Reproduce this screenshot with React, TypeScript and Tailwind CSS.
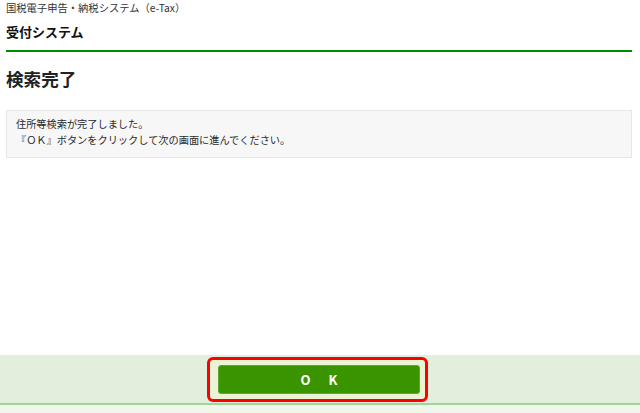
import React from "react";

export default function App() {
  const font = { fontFamily: '"Noto Sans CJK JP", "Noto Sans", sans-serif' };
  return (
    <div className="flex min-h-[413px] flex-col bg-white text-[#222]" style={font}>
      <div className="px-[6px]">
        <div className="pt-[1px] text-[10.3px] leading-[14px] text-[#333]">国税電子申告・納税システム（e-Tax）</div>
        <div className="pt-[8px] pb-[10px] text-[13px] font-bold leading-[17px] text-[#111]">受付システム</div>
        <div className="mr-[2px] h-[2px] bg-[#008a00]" />
        <h1 className="pt-[15px] text-[17.6px] font-bold leading-[24px] text-[#222]">検索完了</h1>
        <div className="mt-[19px] mr-[2px] border border-[#e6e6e6] bg-[#f7f7f7] pl-[9px] pt-[5px] pb-[9px] text-[10.2px] leading-[16px] text-[#2a2a2a]">
          <p>住所等検索が完了しました。</p>
          <p>『ＯＫ』ボタンをクリックして次の画面に進んでください。</p>
        </div>
      </div>
      <div className="mt-auto">
        <div className="flex h-[48px] items-end justify-center bg-[#e1efdc] pb-[1px]">
          <div className="mr-[5px] rounded-[6px] border-[3px] border-[#ff0000] bg-[#eaf4d4] pl-[8px] pr-[5px] py-[5px]">
            <button className="flex h-[29px] w-[202px] items-center justify-center gap-[18px] rounded-[3px] border border-[#5aa830] bg-[#3a9400] text-[13px] font-bold text-white">
              <span>O</span>
              <span>K</span>
            </button>
          </div>
        </div>
        <div className="h-[2px] bg-[#a5d49a]" />
        <div className="h-[8px] bg-[#eef7ea]" />
      </div>
    </div>
  );
}
